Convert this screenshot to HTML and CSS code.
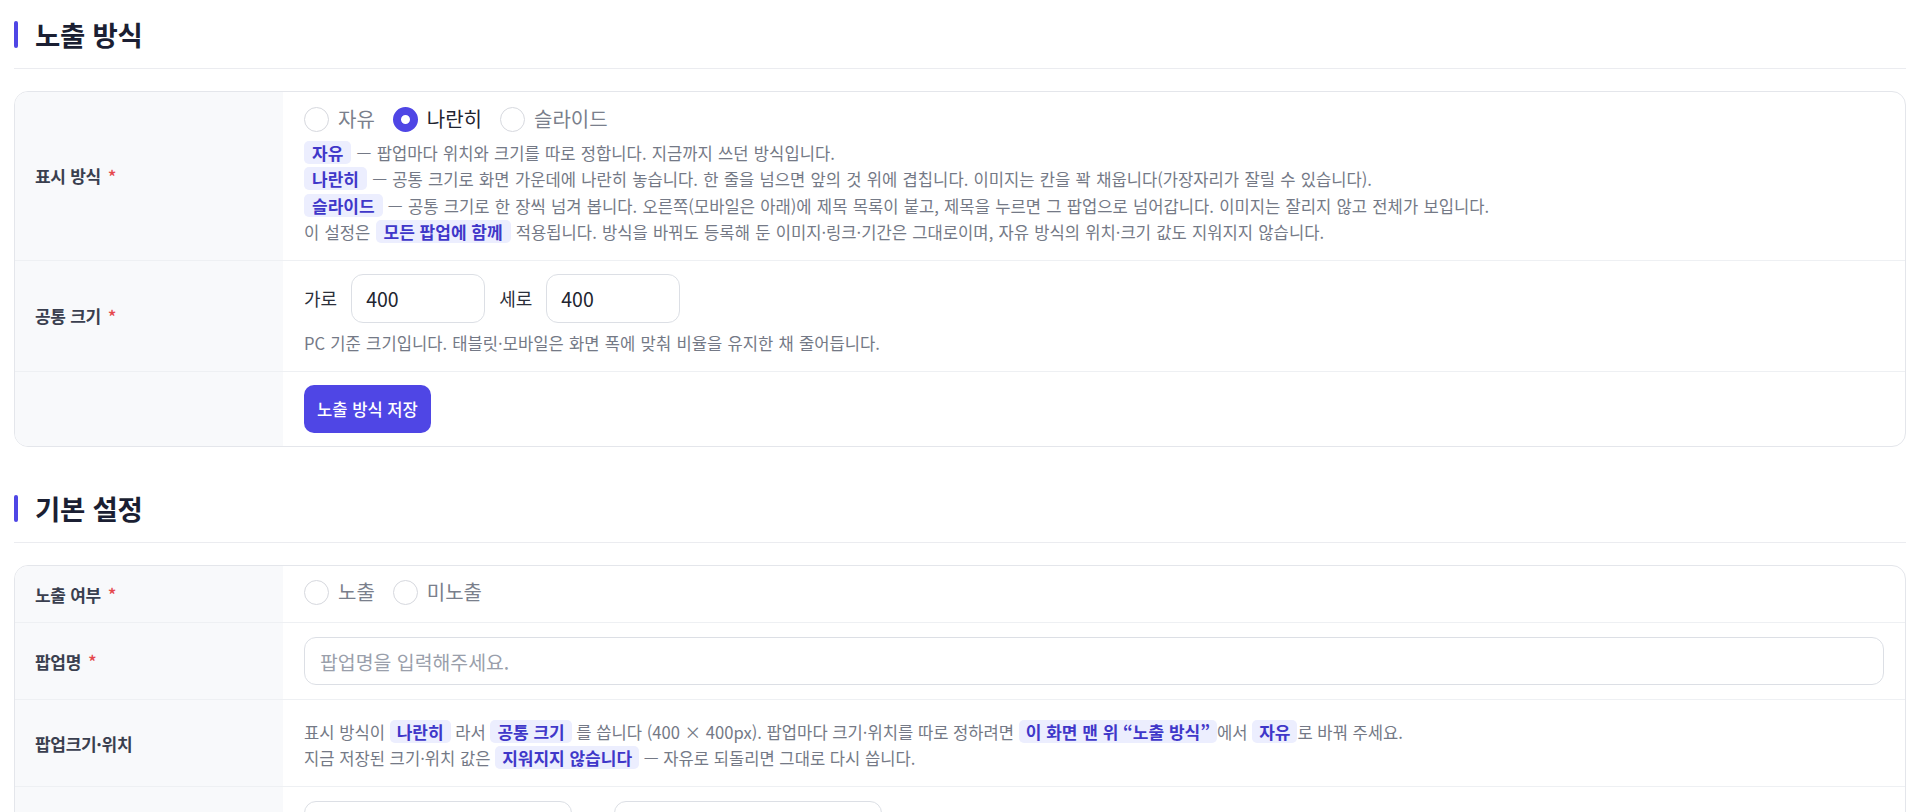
FILE: index.html
```html
<!DOCTYPE html>
<html lang="ko">
<head>
<meta charset="utf-8">
<title>팝업 설정</title>
<link rel="stylesheet" href="styles.css">
</head>
<body>
<div class="page">
  <section class="section">
    <div class="sec-title"><h2>노출 방식</h2></div>
    <div class="card">
      <div class="row">
        <div class="label">표시 방식<span class="req">*</span></div>
        <div class="field">
          <div class="radios">
            <label class="opt"><input type="radio" name="mode"><span>자유</span></label>
            <label class="opt on"><input type="radio" name="mode" checked><span>나란히</span></label>
            <label class="opt"><input type="radio" name="mode"><span>슬라이드</span></label>
          </div>
          <div class="desc">
            <p><b class="chip">자유</b> — 팝업마다 위치와 크기를 따로 정합니다. 지금까지 쓰던 방식입니다.</p>
            <p><b class="chip">나란히</b> — 공통 크기로 화면 가운데에 나란히 놓습니다. 한 줄을 넘으면 앞의 것 위에 겹칩니다. 이미지는 칸을 꽉 채웁니다(가장자리가 잘릴 수 있습니다).</p>
            <p><b class="chip">슬라이드</b> — 공통 크기로 한 장씩 넘겨 봅니다. 오른쪽(모바일은 아래)에 제목 목록이 붙고, 제목을 누르면 그 팝업으로 넘어갑니다. 이미지는 잘리지 않고 전체가 보입니다.</p>
            <p>이 설정은 <b class="chip">모든 팝업에 함께</b> 적용됩니다. 방식을 바꿔도 등록해 둔 이미지·링크·기간은 그대로이며, 자유 방식의 위치·크기 값도 지워지지 않습니다.</p>
          </div>
        </div>
      </div>
      <div class="row">
        <div class="label">공통 크기<span class="req">*</span></div>
        <div class="field field-size">
          <div class="size-line">
            <span>가로</span><input class="num" type="text" value="400">
            <span>세로</span><input class="num" type="text" value="400">
          </div>
          <p class="help">PC 기준 크기입니다. 태블릿·모바일은 화면 폭에 맞춰 비율을 유지한 채 줄어듭니다.</p>
        </div>
      </div>
      <div class="row">
        <div class="label"></div>
        <div class="field field-btn">
          <button class="btn" type="button">노출 방식 저장</button>
        </div>
      </div>
    </div>
  </section>

  <section class="section">
    <div class="sec-title"><h2>기본 설정</h2></div>
    <div class="card">
      <div class="row">
        <div class="label">노출 여부<span class="req">*</span></div>
        <div class="field field-expose">
          <div class="radios">
            <label class="opt"><input type="radio" name="show"><span>노출</span></label>
            <label class="opt"><input type="radio" name="show"><span>미노출</span></label>
          </div>
        </div>
      </div>
      <div class="row">
        <div class="label">팝업명<span class="req">*</span></div>
        <div class="field">
          <input class="text" type="text" placeholder="팝업명을 입력해주세요.">
        </div>
      </div>
      <div class="row">
        <div class="label">팝업크기·위치</div>
        <div class="field field-note">
          <p>표시 방식이 <b class="chip">나란히</b> 라서 <b class="chip">공통 크기</b> 를 씁니다 (400 × 400px). 팝업마다 크기·위치를 따로 정하려면 <b class="chip">이 화면 맨 위 “노출 방식”</b>에서 <b class="chip">자유</b>로 바꿔 주세요.</p>
          <p>지금 저장된 크기·위치 값은 <b class="chip">지워지지 않습니다</b> — 자유로 되돌리면 그대로 다시 씁니다.</p>
        </div>
      </div>
      <div class="row">
        <div class="label">노출 기간</div>
        <div class="field">
          <div class="period">
            <input class="date" type="text">
            <span class="tilde">~</span>
            <input class="date" type="text">
          </div>
        </div>
      </div>
    </div>
  </section>
</div>
</body>
</html>
```

FILE: styles.css
```css
* { box-sizing: border-box; }

body {
  margin: 0;
  background: #ffffff;
  color: #222530;
  font-family: "Noto Sans CJK KR", "Noto Sans", sans-serif;
}

p { margin: 0; }

.page {
  padding: 17px 14px 0;
}

.section + .section {
  margin-top: 44px;
}

.sec-title {
  display: flex;
  align-items: center;
  gap: 17px;
  height: 52px;
  padding-bottom: 17px;
  border-bottom: 1px solid #ebecf0;
  margin-bottom: 22px;
}

.sec-title::before {
  content: "";
  width: 4px;
  height: 27px;
  border-radius: 2px;
  background: #4f46e5;
}

.sec-title h2 {
  margin: 0;
  font-size: 27.5px;
  line-height: 34px;
  font-weight: 700;
  color: #1b1f33;
  letter-spacing: -0.3px;
}

.card {
  border: 1px solid #e4e6eb;
  border-radius: 14px;
  overflow: hidden;
}

.row {
  display: grid;
  grid-template-columns: 268px 1fr;
}

.row + .row {
  border-top: 1px solid #eef0f3;
}

.label {
  display: flex;
  align-items: center;
  padding: 0 20px;
  background: #f8f9fb;
  font-size: 17px;
  font-weight: 600;
  color: #3a3f4f;
  letter-spacing: -0.3px;
}

.req {
  color: #e5484d;
  margin-left: 7px;
  font-size: 18px;
  font-weight: 500;
}

.field {
  padding: 14px 21px 14px;
  min-width: 0;
}

.radios {
  display: flex;
  align-items: center;
  gap: 18px;
  height: 26px;
}

.opt {
  display: flex;
  align-items: center;
  gap: 9px;
  font-size: 20px;
  line-height: 26px;
  color: #7a7f8c;
  cursor: pointer;
}

.opt.on {
  color: #1f2330;
}

.opt input {
  appearance: none;
  -webkit-appearance: none;
  margin: 0;
  width: 25px;
  height: 25px;
  border-radius: 50%;
  border: 1.5px solid #d6d8de;
  background: #fff;
}

.opt input:checked {
  border: 8px solid #4f46e5;
}

.desc {
  margin-top: 8px;
  font-size: 16.6px;
  line-height: 26.4px;
  color: #747986;
  word-spacing: 0.6px;
}

.chip {
  display: inline-block;
  padding: 0 8px;
  line-height: 23px;
  border-radius: 5px;
  background: #eceefe;
  color: #3f37c9;
  font-size: 17px;
  font-weight: 700;
  word-spacing: 0;
}

.field-size {
  padding: 13px 21px 15px;
}

.size-line {
  display: flex;
  align-items: center;
  gap: 14px;
  font-size: 18px;
  color: #2b2f3a;
}

.num {
  width: 134px;
  height: 49px;
  padding: 0 14px;
  border: 1px solid #dcdfe5;
  border-radius: 12px;
  font-family: inherit;
  font-size: 19.5px;
  color: #222530;
  background: #fff;
}

.help {
  margin-top: 7px;
  font-size: 16.6px;
  line-height: 26.4px;
  color: #747986;
  word-spacing: 0.6px;
}

.field-btn {
  padding: 13px 21px 13px;
}

.btn {
  height: 48px;
  padding: 0 13px;
  border: none;
  border-radius: 10px;
  background: #4f46e5;
  color: #ffffff;
  font-family: inherit;
  font-size: 16.6px;
  font-weight: 500;
}

.field-expose {
  padding: 13px 21px 17px;
}

.text {
  display: block;
  width: 100%;
  height: 48px;
  padding: 0 15px;
  border: 1px solid #dcdfe5;
  border-radius: 12px;
  font-family: inherit;
  font-size: 19.4px;
  color: #222530;
  background: #fff;
}

.text::placeholder {
  color: #9a9fab;
}

.field-note {
  padding: 19px 21px 15px;
  font-size: 16.6px;
  line-height: 26px;
  color: #747986;
}

.field-note .chip {
  padding: 0 7px;
}

.period {
  display: flex;
  align-items: center;
}

.date {
  width: 268px;
  height: 48px;
  border: 1px solid #dcdfe5;
  border-radius: 12px;
  background: #fff;
}

.tilde {
  width: 42px;
  text-align: center;
  font-size: 16px;
  color: #747986;
}
```
